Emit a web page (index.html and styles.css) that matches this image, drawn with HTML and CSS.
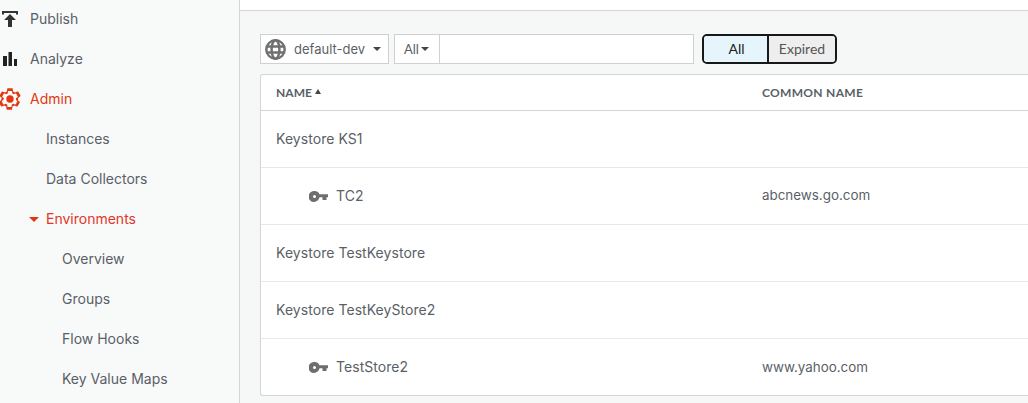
FILE: index.html
```html
<!DOCTYPE html>
<html lang="en">
<head>
  <meta charset="UTF-8">
  <meta name="viewport" content="width=device-width, initial-scale=1.0">
  <title>Keystores</title>
  <link rel="stylesheet" href="styles.css">
</head>
<body>
  <nav class="sidebar">
    <a class="nav-item">
      <svg class="nav-icon" viewBox="0 0 20 20"><path d="M2 2h16v3.500h-2V4H4v1.500H2z M10 5l6 6h-4v7H8v-7H4z" fill="#333"/></svg>
      Publish
    </a>
    <a class="nav-item">
      <svg class="nav-icon" viewBox="0 0 20 20"><path d="M3 7h4v10H3z M8.500 3h3.500v14H8.500z M14 10h3v7h-3z" fill="#222"/></svg>
      Analyze
    </a>
    <a class="nav-item active">
      <svg class="nav-icon gear" viewBox="0 0 24 24">
        <path fill="#e2370f" d="M19.430 12.980c.04-.32.07-.64.07-.98s-.03-.66-.07-.98l2.110-1.650c.19-.15.240-.42.120-.64l-2-3.460c-.12-.22-.39-.3-.61-.22l-2.490 1c-.52-.4-1.080-.73-1.690-.98l-.38-2.650A.488.488 0 0 0 14 2h-4c-.25 0-.46.18-.49.420l-.38 2.650c-.61.25-1.170.59-1.690.98l-2.490-1c-.23-.09-.49 0-.61.220l-2 3.460c-.13.220-.7.490.12.640l2.110 1.650c-.04.32-.7.650-.7.980s.03.660.07.980l-2.110 1.650c-.19.150-.24.420-.12.640l2 3.460c.12.220.39.300.61.220l2.490-1c.52.400 1.080.730 1.690.980l.38 2.650c.03.240.24.420.49.420h4c.25 0 .46-.18.490-.42l.38-2.650c.61-.25 1.170-.59 1.690-.98l2.490 1c.23.090.49 0 .61-.22l2-3.460c.12-.22.07-.49-.12-.64l-2.110-1.650z"/>
        <path fill="#f8f9f9" transform="translate(12 12) scale(.74) translate(-12 -12)" d="M19.430 12.980c.04-.32.07-.64.07-.98s-.03-.66-.07-.98l2.110-1.650c.19-.15.240-.42.120-.64l-2-3.460c-.12-.22-.39-.3-.61-.22l-2.490 1c-.52-.4-1.080-.73-1.690-.98l-.38-2.650A.488.488 0 0 0 14 2h-4c-.25 0-.46.18-.49.420l-.38 2.650c-.61.25-1.170.59-1.690.98l-2.490-1c-.23-.09-.49 0-.61.220l-2 3.460c-.13.220-.7.490.12.640l2.110 1.650c-.04.32-.7.650-.7.980s.03.660.07.980l-2.110 1.650c-.19.150-.24.420-.12.640l2 3.460c.12.220.39.300.61.220l2.490-1c.52.400 1.080.730 1.690.980l.38 2.650c.03.240.24.420.49.420h4c.25 0 .46-.18.490-.42l.38-2.650c.61-.25 1.170-.59 1.690-.98l2.490 1c.23.090.49 0 .61-.22l2-3.460c.12-.22.07-.49-.12-.64l-2.110-1.650z"/>
        <circle cx="12" cy="12" r="3.400" fill="#e2370f"/>
      </svg>
      Admin
    </a>
    <a class="nav-item sub">Instances</a>
    <a class="nav-item sub">Data Collectors</a>
    <a class="nav-item sub open"><span class="caret-red"></span>Environments</a>
    <a class="nav-item subsub">Overview</a>
    <a class="nav-item subsub">Groups</a>
    <a class="nav-item subsub">Flow Hooks</a>
    <a class="nav-item subsub">Key Value Maps</a>
  </nav>

  <main class="content">
    <div class="topbar"></div>
    <div class="toolbar">
      <div class="env-select">
        <svg class="globe" viewBox="0 0 24 24" fill="none" stroke="#707070" stroke-width="2.800"><circle cx="12" cy="12" r="10.500"/><ellipse cx="12" cy="12" rx="4.500" ry="10.500"/><path d="M2 8.500h20M2 15.500h20"/></svg>
        <span>default-dev</span>
        <span class="caret"></span>
      </div>
      <div class="search">
        <div class="search-type">All<span class="caret small"></span></div>
        <input class="search-input" type="text">
      </div>
      <div class="toggle">
        <button class="toggle-btn on">All</button>
        <button class="toggle-btn">Expired</button>
      </div>
    </div>

    <div class="table">
      <div class="row head">
        <div class="col-name">NAME<span class="sort"></span></div>
        <div>COMMON NAME</div>
      </div>
      <div class="row">
        <div class="col-name">Keystore KS1</div>
      </div>
      <div class="row">
        <div class="col-name child">
          <svg class="key" viewBox="0 0 19 11"><path fill="#6e6e6e" fill-rule="evenodd" d="M5.500 0a5.500 5.500 0 0 1 5 3.200H19v3.100h-1.500V9h-4V6.300h-3a5.500 5.500 0 1 1-5-6.300zm0 4a1.500 1.500 0 1 0 0 3 1.500 1.500 0 0 0 0-3z"/></svg>
          TC2
        </div>
        <div class="col-common">abcnews.go.com</div>
      </div>
      <div class="row">
        <div class="col-name">Keystore TestKeystore</div>
      </div>
      <div class="row">
        <div class="col-name">Keystore TestKeyStore2</div>
      </div>
      <div class="row">
        <div class="col-name child">
          <svg class="key" viewBox="0 0 19 11"><path fill="#6e6e6e" fill-rule="evenodd" d="M5.500 0a5.500 5.500 0 0 1 5 3.200H19v3.100h-1.500V9h-4V6.300h-3a5.500 5.500 0 1 1-5-6.300zm0 4a1.500 1.500 0 1 0 0 3 1.500 1.500 0 0 0 0-3z"/></svg>
          TestStore2
        </div>
        <div class="col-common">www.yahoo.com</div>
      </div>
    </div>
  </main>
</body>
</html>
```

FILE: styles.css
```css
html, body {
  height: 100%;
}
body {
  margin: 0;
  display: flex;
  overflow: hidden;
  font-family: Inter, "Liberation Sans", sans-serif;
  font-size: 14px;
  color: #5a5f67;
  background-color: #f6f7f7;
}
.sidebar {
  flex: 0 0 239px;
  margin-top: -1px;
  background-color: #f8f9f9;
  border-right: 1px solid #d4d6d6;
}
.nav-item {
  display: flex;
  align-items: center;
  box-sizing: border-box;
  height: 40px;
  padding-bottom: 2px;
  padding-left: 30px;
  position: relative;
}
.nav-icon {
  position: absolute;
  left: 0;
  top: 10px;
  width: 20px;
  height: 20px;
}
.gear {
  top: 7px;
  left: -3px;
  width: 26px;
  height: 26px;
}
.active {
  color: #e2370f;
}
.sub {
  padding-left: 46px;
}
.subsub {
  padding-left: 62px;
}
.open {
  color: #e2372a;
}
.caret-red {
  position: absolute;
  left: 29px;
  top: 18px;
  border-left: 5px solid transparent;
  border-right: 5px solid transparent;
  border-top: 5px solid #e2370f;
}
.content {
  flex: 1;
  min-width: 0;
}
.topbar {
  height: 10px;
  background-color: white;
  border-bottom: 1px solid #d4d6d6;
}
.toolbar {
  display: flex;
  align-items: stretch;
  height: 30px;
  margin: 23px 0 10px 20px;
}
.env-select {
  display: flex;
  align-items: center;
  width: 129px;
  box-sizing: border-box;
  padding-left: 4px;
  background-color: white;
  border: 1px solid #cfd1d1;
  font-size: 13px;
}
.globe {
  width: 21px;
  height: 21px;
  margin-right: 8px;
}
.caret {
  margin-left: 8px;
  border-left: 4px solid transparent;
  border-right: 4px solid transparent;
  border-top: 4px solid #444;
}
.small {
  margin-left: 2px;
}
.search {
  display: flex;
  width: 300px;
  box-sizing: border-box;
  margin-left: 5px;
  background-color: white;
  border: 1px solid #cfd1d1;
}
.search-type {
  display: flex;
  align-items: center;
  width: 45px;
  box-sizing: border-box;
  padding-left: 9px;
  border-right: 1px solid #cfd1d1;
  font-family: Lato, sans-serif;
  font-size: 13px;
}
.search-input {
  flex: 1;
  min-width: 0;
  border: 0;
  padding: 0;
}
.toggle {
  display: flex;
  width: 135px;
  box-sizing: border-box;
  margin-left: 8px;
  border: 2px solid #16181a;
  border-radius: 5px;
  overflow: hidden;
}
.toggle-btn {
  padding: 0 0 2px;
  border: 0;
  font-family: Lato, sans-serif;
  font-size: 14px;
  color: #555;
  background-color: #eeeeee;
  flex: 1;
}
.on {
  flex: 0 0 65px;
  padding-left: 2px;
  color: #222;
  background-color: #e6f5fb;
  border-right: 2px solid #16181a;
}
.table {
  box-sizing: border-box;
  height: 322px;
  margin-left: 20px;
  background-color: white;
  border: 1px solid #d4d6d6;
  border-right: 0;
  border-radius: 3px 0 0 3px;
}
.row {
  display: flex;
  align-items: center;
  height: 57px;
  box-sizing: border-box;
  padding-bottom: 2px;
  border-bottom: 1px solid #e8e8e8;
}
.row:last-child {
  border-bottom: 0;
}
.head {
  height: 36px;
  padding-bottom: 0;
  border-bottom-color: #d4d6d6;
  font-family: Lato, sans-serif;
  font-size: 12px;
  font-weight: bold;
  letter-spacing: 0.3px;
}
.col-name {
  flex: 0 0 501px;
  box-sizing: border-box;
  padding-left: 15px;
  display: flex;
  align-items: center;
  letter-spacing: 0.05px;
}
.col-common {
  font-size: 13.400px;
}
.child {
  padding-left: 48px;
}
.key {
  width: 19px;
  height: 11px;
  margin-top: 2px;
  margin-right: 8px;
}
.sort {
  margin-left: 3px;
  margin-bottom: 2px;
  border-left: 3px solid transparent;
  border-right: 3px solid transparent;
  border-bottom: 5px solid #444;
}
```
